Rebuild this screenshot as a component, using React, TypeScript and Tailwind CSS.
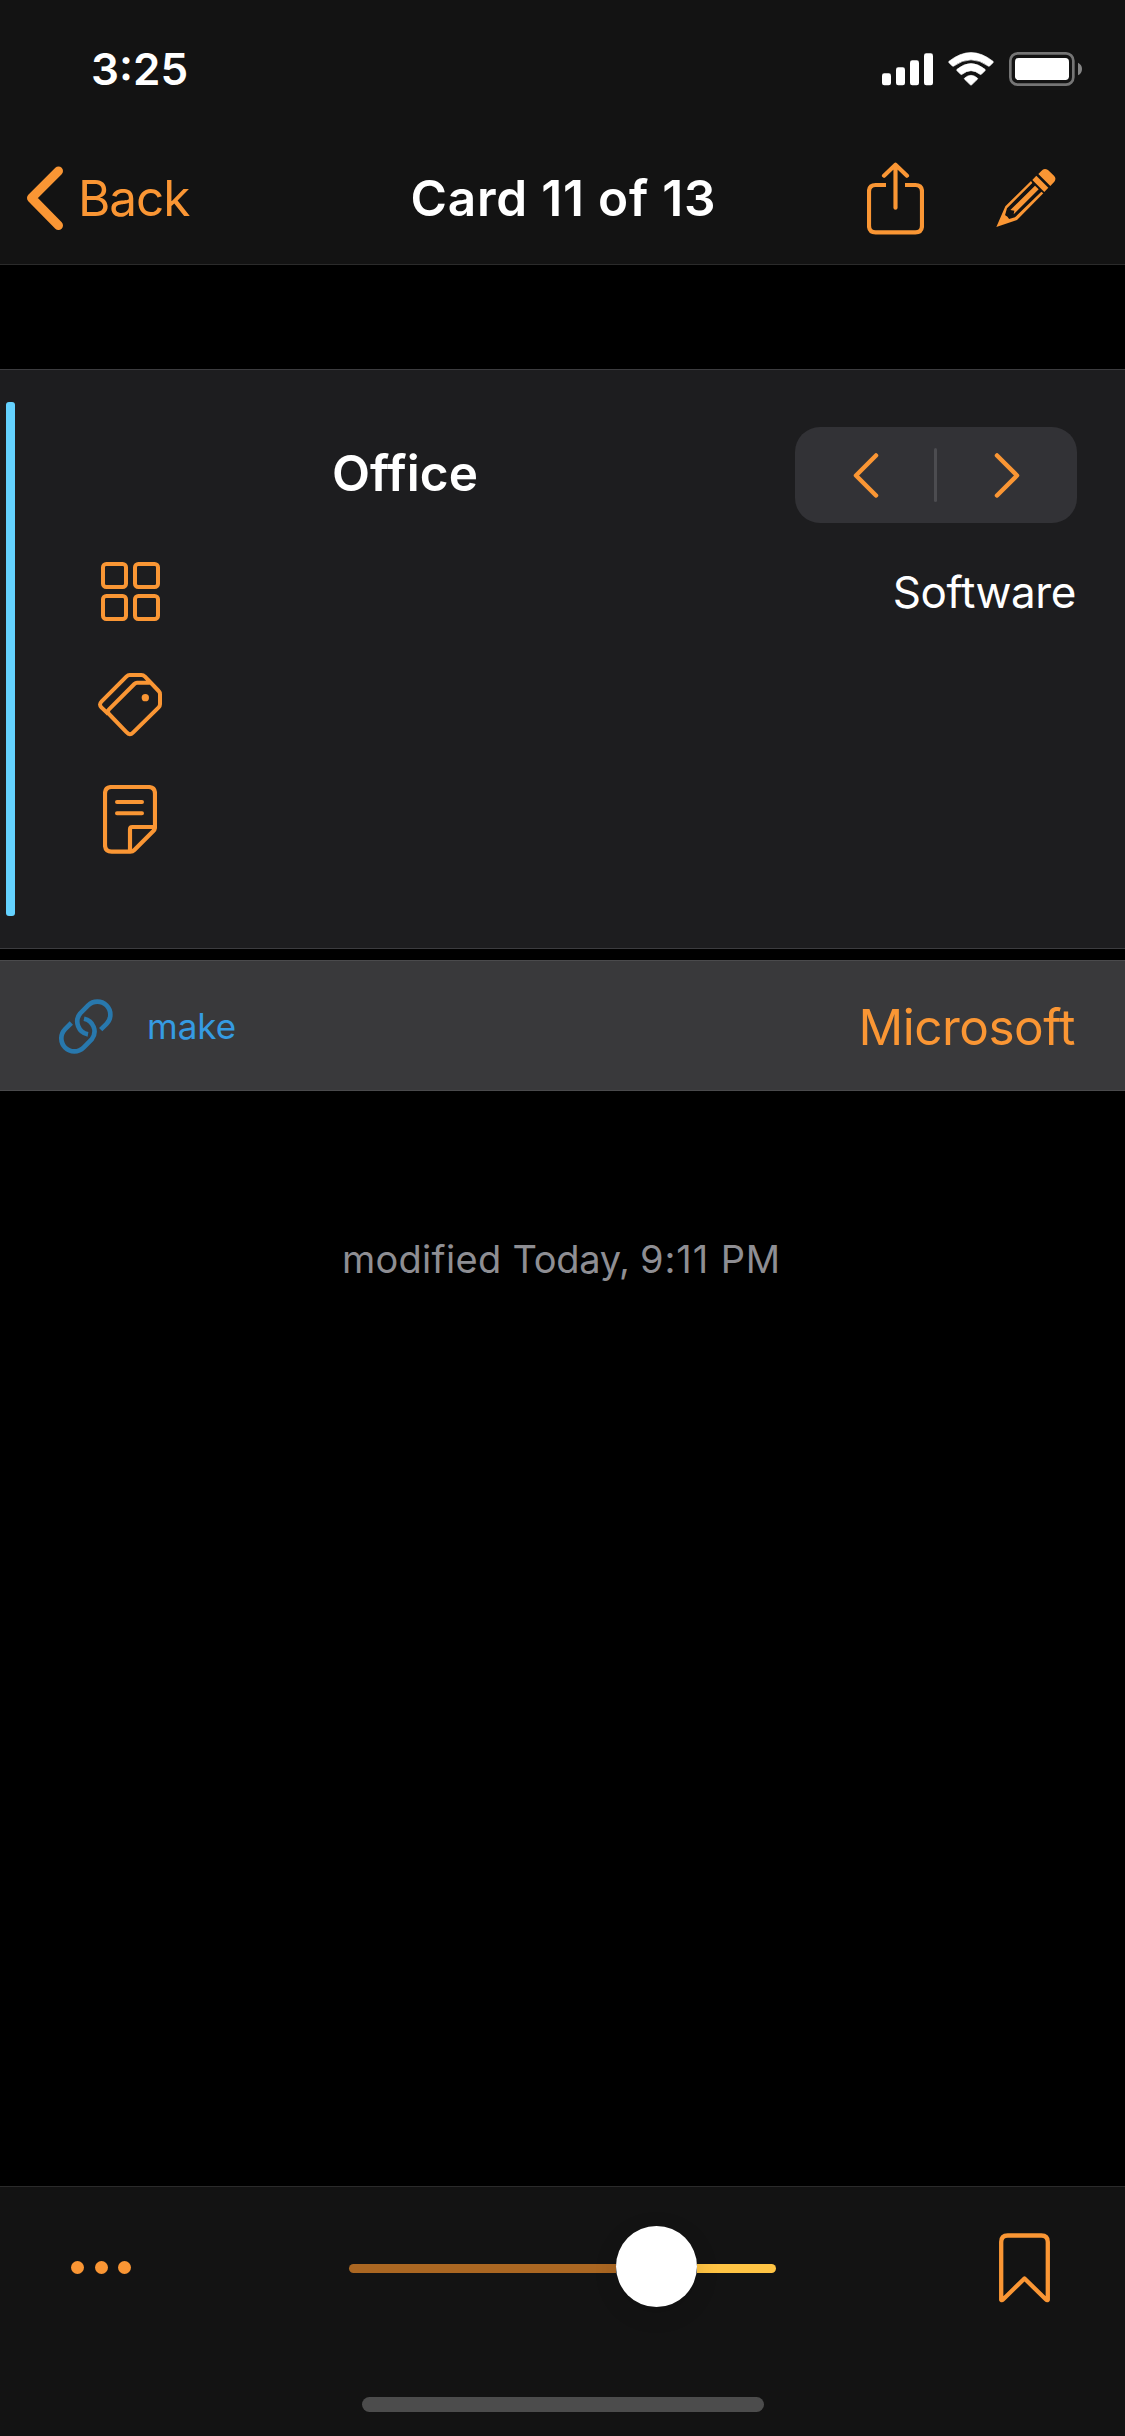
import type { ReactNode } from "react";

const ACCENT = "#fa9634";

function SignalIcon() {
  return (
    <svg width="51" height="33" viewBox="0 0 153 99" fill="#fff">
      <rect x="0" y="61" width="27" height="36" rx="7" />
      <rect x="42" y="43" width="27" height="54" rx="7" />
      <rect x="84" y="22" width="27" height="75" rx="7" />
      <rect x="126" y="1" width="27" height="96" rx="7" />
    </svg>
  );
}

function WifiIcon() {
  return (
    <svg width="46" height="34" viewBox="369 95 138 102" fill="#fff" stroke="#fff" strokeWidth="2" strokeLinejoin="round">
      <path d="M372 123Q438 70.500 504 123Q506 125 504 127L494 137Q492 139 489.500 137Q438 100 386.500 137Q384 139 382 137L372 127Q370 125 372 123Z" />
      <path d="M396 147Q438 112.500 480 147Q482 149 480 151L469 162Q467 163.500 465 162Q438 140 411 162Q409 163.500 407 162L396 151Q394 149 396 147Z" />
      <path d="M419 173Q438 157 457 173Q459 175 457 177L440 193.500Q438 195 436 193.500L419 177Q417 175 419 173Z" />
    </svg>
  );
}

function BatteryIcon() {
  return (
    <svg width="73" height="34" viewBox="552 96 219 102">
      <rect x="556" y="100" width="189" height="94" rx="22" fill="none" stroke="#757575" strokeWidth="8" />
      <rect x="570" y="114" width="162" height="66" rx="11" fill="#fff" />
      <path d="M759 128Q771 134 771 147Q771 160 759 166Z" fill="#858585" />
    </svg>
  );
}

function ShareIcon() {
  return (
    <svg width="57" height="73" viewBox="126 424 171 219" fill="none" stroke={ACCENT} strokeWidth="12.500">
      <path d="M183 493H152Q132 493 132 513V615Q132 635 152 635H271Q291 635 291 615V513Q291 493 271 493H240" />
      <path d="M211.500 561V433M177 465L211.500 432L246 465" strokeLinecap="round" strokeLinejoin="round" />
    </svg>
  );
}

function PencilIcon() {
  return (
    <svg width="60" height="60" viewBox="512 441 180 180">
      <g fill={ACCENT}>
        <path d="M639 459L648 450Q656 440 668 447L686 464Q694 473 687 482L675 495Z" />
        <path d="M633 464L669 500L657 513L621 477Z" />
        <path d="M617 480L540 556L513 618L575 597L654 517L648 512L569 589L551 594Q548 586 539 583L545 562L621 486Z" />
        <path d="M539 583L551 595L522 609Z" />
        <path d="M629 494L640 505L577 568L565 580L567 569L555 567Z" />
      </g>
    </svg>
  );
}

function GridIcon() {
  return (
    <svg width="59" height="59" viewBox="0 0 177 177" fill="none" stroke={ACCENT} strokeWidth="12">
      <rect x="6" y="6" width="69" height="69" rx="10" />
      <rect x="102" y="6" width="69" height="69" rx="10" />
      <rect x="6" y="102" width="69" height="69" rx="10" />
      <rect x="102" y="102" width="69" height="69" rx="10" />
    </svg>
  );
}

function TagsIcon() {
  return (
    <svg width="64" height="64" viewBox="114 99 192 192" fill="none" stroke={ACCENT} strokeWidth="12" strokeLinejoin="round">
      <path d="M272 128H231Q227 128 223 132L147 208Q140 215 147 222L200 277Q209 288 219 278L296 202Q300 198 300 193V163Q300 157 296 153L255 110Q250 105 244 105H209Q204 105 199 110L125 184Q115 194 125 203L145 222" />
      <circle cx="256" cy="173" r="11" fill={ACCENT} stroke="none" />
    </svg>
  );
}

function NoteIcon() {
  return (
    <svg width="54" height="69" viewBox="129 435 162 207" fill="none" stroke={ACCENT} strokeWidth="12.500">
      <path d="M155 441H265Q285 441 285 461V561Q285 568 280 573L223 630Q218 635 211 635H155Q135 635 135 615V461Q135 441 155 441Z" />
      <path d="M285 561H217Q210 561 210 568V635" />
      <path d="M171 486H246M171 520H246" strokeLinecap="round" strokeWidth="12" />
    </svg>
  );
}

function LinkIcon() {
  return (
    <svg width="54" height="55" viewBox="177 239 162 165" fill="none" stroke="#2878ad" strokeWidth="14">
      <path d="M302 331L319.600 313.600A39 39 0 0 0 264.400 258.400L240.400 282.400A39 39 0 0 0 264 345" />
      <path d="M214 311L195.400 329.400A39 39 0 0 0 250.600 384.600L275.600 359.600A39 39 0 0 0 252 298" />
    </svg>
  );
}

function BookmarkIcon() {
  return (
    <svg width="51" height="70" viewBox="0 0 51 70" fill="none" stroke={ACCENT} strokeWidth="4.300" strokeLinejoin="round">
      <path d="M2.200 66.800V9Q2.200 2.500 8.700 2.500H42.300Q48.800 2.500 48.800 9V66.800Q48 67.500 47 66.500L25.500 45.500L4 66.500Q3 67.500 2.200 66.800Z" />
    </svg>
  );
}

function MetaRow({ icon, children }: { icon: ReactNode; children?: ReactNode }) {
  return (
    <div className="flex h-[114px] items-center justify-between pr-[49px]">
      <div className="ml-[98px] flex w-16 justify-center">{icon}</div>
      {children}
    </div>
  );
}

export default function App() {
  return (
    <div className="flex h-[2436px] w-[1125px] flex-col bg-black font-[Inter,sans-serif] text-white">
      <header className="h-[265px] border-b border-[#2b2b2b] bg-[#131313]">
        <div className="flex h-[132px] items-center justify-between pt-[6px] pr-[43px] pl-[91px]">
          <span className="text-[44px] leading-none font-semibold">3:25</span>
          <div className="flex items-center">
            <SignalIcon />
            <div className="ml-[15px]">
              <WifiIcon />
            </div>
            <div className="ml-[15px]">
              <BatteryIcon />
            </div>
          </div>
        </div>
        <nav className="grid h-[132px] grid-cols-[410.5px_304px_1fr] items-center">
          <button className="flex items-center pl-[26px] text-[49.5px] leading-none tracking-[-1.05px] text-[#fa9634]">
            <svg width="38" height="64" viewBox="0 0 38 64" fill="none" stroke={ACCENT} strokeWidth="9" strokeLinecap="round" strokeLinejoin="round">
              <path d="M32.500 5L5.500 32L32.500 59.500" />
            </svg>
            <span className="ml-[14px] pt-[2px]">Back</span>
          </button>
          <h1 className="pt-[2px] text-[49.5px] leading-none font-semibold tracking-[0.8px] whitespace-nowrap">Card 11 of 13</h1>
          <div className="flex items-center justify-end pr-[69px]">
            <ShareIcon />
            <div className="ml-[72px]">
              <PencilIcon />
            </div>
          </div>
        </nav>
      </header>

      <section className="mt-[104px] flex h-[580px] border-y border-[#3c3c3f] bg-[#1d1d1f]">
        <div className="mt-[32px] ml-[6px] h-[514px] w-[9px] rounded-[3px] bg-[#64d2ff]" />
        <div className="flex-1">
          <div className="mt-[57px] flex h-24 items-center pr-[48px]">
            <h2 className="-mt-[3px] flex-1 text-center text-[49.5px] leading-none font-semibold">Office</h2>
            <div className="flex h-24 w-[282px] items-center rounded-[25px] bg-[#323236] text-[#fa9634]">
              <button className="flex h-full w-[139px] items-center justify-center pl-[3px]">
                <svg width="26" height="45" viewBox="0 0 26 45" fill="none" stroke="currentColor" strokeWidth="4.500" strokeLinecap="round" strokeLinejoin="round">
                  <path d="M23 2.500L3 22.500L23 42.500" />
                </svg>
              </button>
              <span className="h-[54px] w-[3px] rounded-full bg-[#4c4c50]" />
              <button className="flex h-full flex-1 items-center justify-center">
                <svg width="26" height="45" viewBox="0 0 26 45" fill="none" stroke="currentColor" strokeWidth="4.500" strokeLinecap="round" strokeLinejoin="round">
                  <path d="M3 2.500L23 22.500L3 42.500" />
                </svg>
              </button>
            </div>
          </div>
          <div className="-ml-[15px] pt-[11px]">
            <MetaRow icon={<GridIcon />}>
              <span className="pt-[2px] text-[44px] leading-none tracking-[-0.43px]">Software</span>
            </MetaRow>
            <MetaRow icon={<TagsIcon />} />
            <MetaRow icon={<NoteIcon />} />
          </div>
        </div>
      </section>

      <div className="mt-[11px] flex h-[131px] items-center justify-between border-y border-[#4a4a4c] bg-[#39393b] pr-[50px] pl-[59px]">
        <div className="flex items-center pt-[2px]">
          <LinkIcon />
          <span className="ml-[34px] text-[35px] leading-none text-[#359be2]">make</span>
        </div>
        <span className="pt-[5px] text-[49.5px] leading-none tracking-[-0.52px] text-[#fa9634]">Microsoft</span>
      </div>

      <p className="mt-[149px] pr-[2px] text-center text-[38px] leading-[38px] tracking-[0.29px] text-[#8e8e93]">
        modified <span className="tracking-[-0.3px]">Today, </span>
        <span className="tracking-[0.9px]">9:11 PM</span>
      </p>

      <footer className="mt-auto flex h-[250px] flex-col items-center border-t border-[#2b2b2b] bg-[#131313]">
        <div className="mt-[39px] flex h-[81px] w-full items-center pr-[75px] pl-[71px]">
          <div className="mt-[2px] flex w-[60px] justify-between">
            <span className="h-[13px] w-[13px] rounded-full bg-[#fa9634]" />
            <span className="h-[13px] w-[13px] rounded-full bg-[#fa9634]" />
            <span className="h-[13px] w-[13px] rounded-full bg-[#fa9634]" />
          </div>
          <div className="ml-[218px] flex h-[81px] w-[427px] items-center">
            <span className="mt-[4px] h-[9px] w-[267px] rounded-l-full bg-[#ab6722]" />
            <span className="relative z-10 h-[81px] w-[81px] shrink-0 rounded-full bg-white shadow-[0_6px_24px_rgba(0,0,0,0.12)]" />
            <span className="mt-[4px] h-[9px] flex-1 rounded-r-full bg-[#ffc444]" />
          </div>
          <div className="ml-auto pt-[2px]">
            <BookmarkIcon />
          </div>
        </div>
        <div className="mt-auto mb-6 h-[15px] w-[402px] rounded-full bg-[#4c4c4c]" />
      </footer>
    </div>
  );
}
